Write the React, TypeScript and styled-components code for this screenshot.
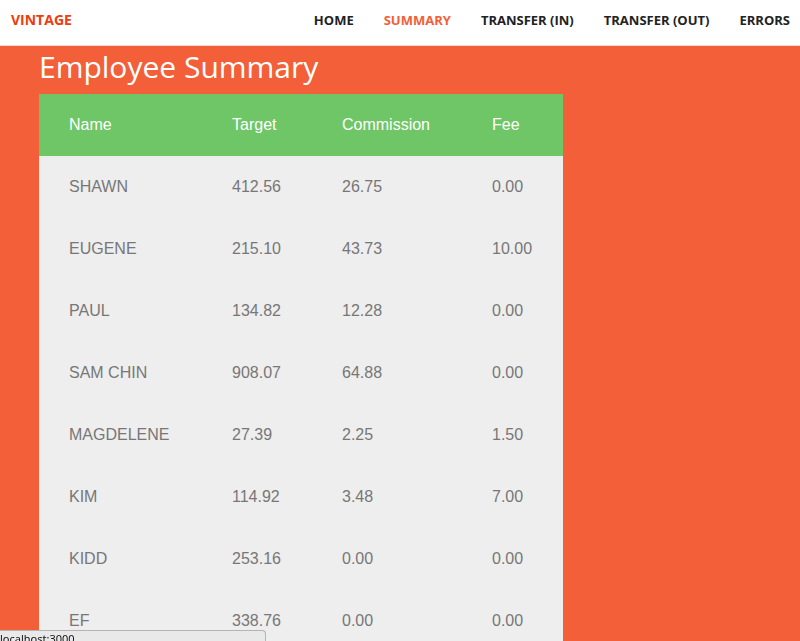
import React from "react";
import styled, { createGlobalStyle } from "styled-components";

const Global = createGlobalStyle`
  * { box-sizing: border-box; }
  html, body { margin: 0; height: 100%; }
  #root { height: 100%; }
  body { background: #f25f38; font-family: "Open Sans", sans-serif; overflow: hidden; }
`;

const Page = styled.div`
  height: 100vh;
  overflow: hidden;
`;

const Header = styled.header`
  display: flex;
  align-items: center;
  justify-content: space-between;
  height: 46px;
  padding: 0 10px 6px 11px;
  border-bottom: 1px solid #f6d9ce;
  background: #fff;
`;

const Brand = styled.a`
  color: #f03c0c;
  font-size: 14px;
  font-weight: 700;
  line-height: 20px;
  text-decoration: none;
`;

const Nav = styled.nav`
  display: flex;
  gap: 30px;
`;

const NavLink = styled.a<{ $active?: boolean }>`
  color: ${(p) => (p.$active ? "#f25f38" : "#222")};
  font-size: 13px;
  font-weight: 700;
  line-height: 20px;
  text-decoration: none;
  white-space: nowrap;
`;

const Main = styled.main`
  padding: 0 39px;
`;

const Title = styled.h1`
  margin: 0;
  padding-bottom: 6px;
  color: #fff;
  font-size: 30px;
  font-weight: 400;
  line-height: 42px;
`;

const Table = styled.table`
  border-collapse: collapse;
  background: #eee;
  color: #777;
  font-family: "Liberation Sans", Arial, sans-serif;
  font-size: 16px;
  line-height: 22px;
  text-align: left;
`;

const HeadRow = styled.tr`
  background: #6fc667;
  color: #fff;
`;

const HeadCell = styled.th<{ $width: number }>`
  min-width: ${(p) => p.$width}px;
  padding: 20px 30px;
  font-weight: 400;
`;

const Cell = styled.td`
  padding: 20px 30px;
`;

const StatusBar = styled.div`
  position: fixed;
  left: 0;
  bottom: 0;
  width: 266px;
  height: 11px;
  overflow: hidden;
  border: 1px solid #b4b4b4;
  border-width: 1px 1px 0 0;
  border-radius: 0 4px 0 0;
  background: #e9e9e9;
  color: #111;
  font-family: "Noto Sans", sans-serif;
  font-size: 11px;
  line-height: 15px;
`;

const links = ["HOME", "SUMMARY", "TRANSFER (IN)", "TRANSFER (OUT)", "ERRORS"];
const columns = [
  { label: "Name", width: 163 },
  { label: "Target", width: 110 },
  { label: "Commission", width: 150 },
  { label: "Fee", width: 101 },
];
const employees = [
  ["SHAWN", "412.56", "26.75", "0.00"],
  ["EUGENE", "215.10", "43.73", "10.00"],
  ["PAUL", "134.82", "12.28", "0.00"],
  ["SAM CHIN", "908.07", "64.88", "0.00"],
  ["MAGDELENE", "27.39", "2.25", "1.50"],
  ["KIM", "114.92", "3.48", "7.00"],
  ["KIDD", "253.16", "0.00", "0.00"],
  ["EF", "338.76", "0.00", "0.00"],
];

export default function App() {
  return (
    <Page>
      <Global />
      <Header>
        <Brand href="#">VINTAGE</Brand>
        <Nav>
          {links.map((label) => (
            <NavLink key={label} href="#" $active={label === "SUMMARY"}>
              {label}
            </NavLink>
          ))}
        </Nav>
      </Header>
      <Main>
        <Title>Employee Summary</Title>
        <Table>
          <thead>
            <HeadRow>
              {columns.map((c) => (
                <HeadCell key={c.label} scope="col" $width={c.width}>
                  {c.label}
                </HeadCell>
              ))}
            </HeadRow>
          </thead>
          <tbody>
            {employees.map((row) => (
              <tr key={row[0]}>
                {row.map((value, i) => (
                  <Cell key={columns[i].label}>{value}</Cell>
                ))}
              </tr>
            ))}
          </tbody>
        </Table>
      </Main>
      <StatusBar>localhost:3000</StatusBar>
    </Page>
  );
}
